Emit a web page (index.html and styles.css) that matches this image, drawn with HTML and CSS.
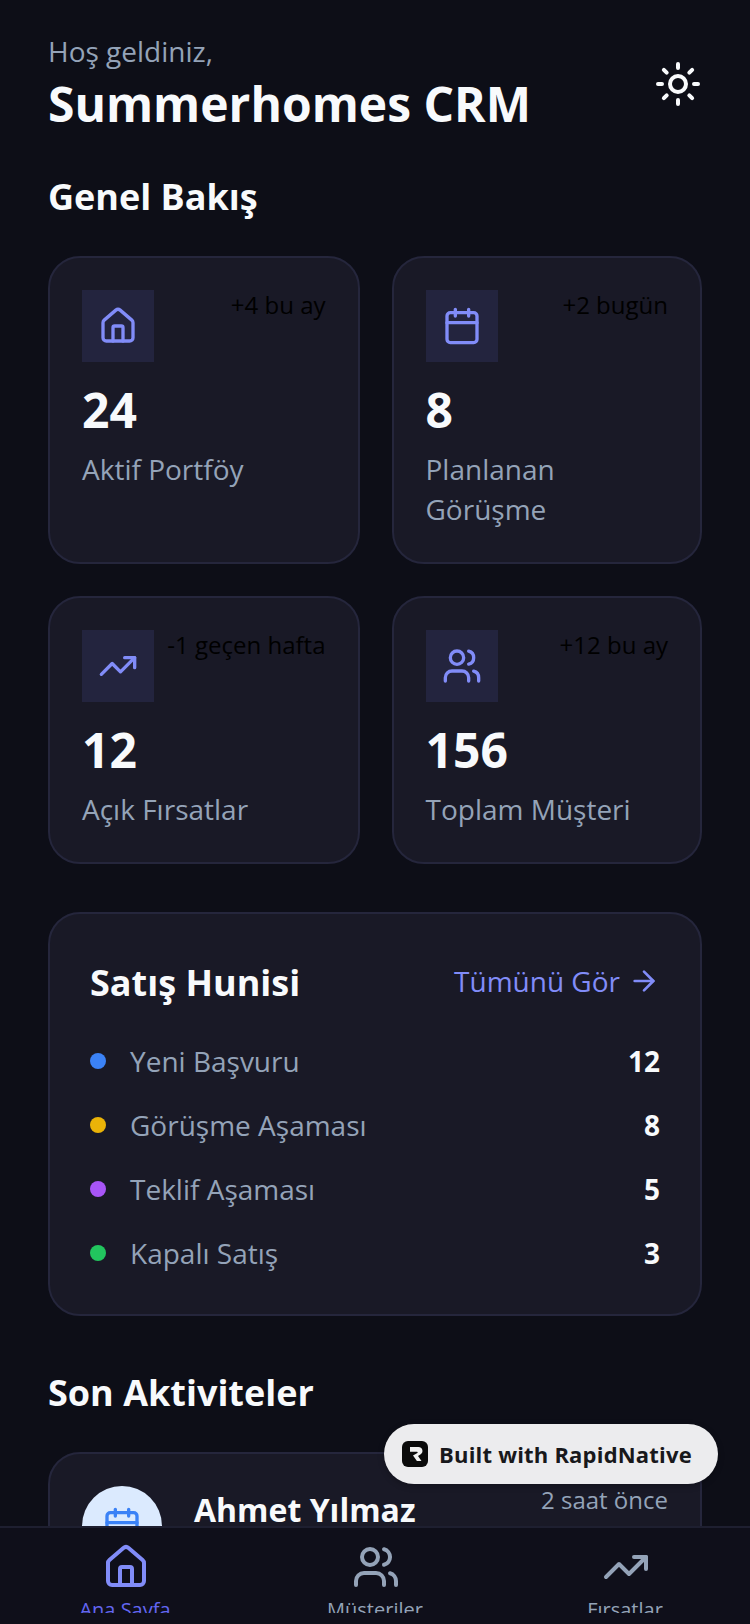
FILE: index.html
```html
<!DOCTYPE html>
<html>
<head lang="tr">
    <meta charset="UTF-8">
    <title>Summerhomes CRM</title>
    <link rel="stylesheet" href="styles.css">
</head>
<body>
<div class="app">
    <div class="content">
        <!-- header -->
        <div class="header">
            <div>
                <div class="hello">Hoş geldiniz,</div>
                <div class="brand">Summerhomes CRM</div>
            </div>
            <svg class="sun" viewBox="0 0 24 24"><circle cx="12" cy="12" r="4"/><path d="M12 2v2M12 20v2M4.93 4.93l1.41 1.41M17.66 17.66l1.41 1.41M2 12h2M20 12h2M6.34 17.66l-1.41 1.41M19.07 4.93l-1.41 1.41"/></svg>
        </div>

        <h2 class="section-title">Genel Bakış</h2>
        <div class="stats">
            <div class="stat-card">
                <div class="stat-top">
                    <div class="stat-icon"><svg class="icon" viewBox="0 0 24 24"><path d="M15 21v-8a1 1 0 0 0-1-1h-4a1 1 0 0 0-1 1v8"/><path d="M3 10a2 2 0 0 1 .709-1.528l7-5.999a2 2 0 0 1 2.582 0l7 5.999A2 2 0 0 1 21 10v9a2 2 0 0 1-2 2H5a2 2 0 0 1-2-2z"/></svg></div>
                    <span class="stat-note">+4 bu ay</span>
                </div>
                <div class="stat-value">24</div>
                <div class="stat-label">Aktif Portföy</div>
            </div>
            <div class="stat-card">
                <div class="stat-top">
                    <div class="stat-icon"><svg class="icon" viewBox="0 0 24 24"><path d="M8 2v4M16 2v4M3 10h18"/><rect x="3" y="4" width="18" height="18" rx="2"/></svg></div>
                    <span class="stat-note">+2 bugün</span>
                </div>
                <div class="stat-value">8</div>
                <div class="stat-label">Planlanan Görüşme</div>
            </div>
            <div class="stat-card">
                <div class="stat-top">
                    <div class="stat-icon"><svg class="icon" viewBox="0 0 24 24"><path d="M22 7l-8.5 8.5-5-5L2 17"/><path d="M16 7h6v6"/></svg></div>
                    <span class="stat-note">-1 geçen hafta</span>
                </div>
                <div class="stat-value">12</div>
                <div class="stat-label">Açık Fırsatlar</div>
            </div>
            <div class="stat-card">
                <div class="stat-top">
                    <div class="stat-icon"><svg class="icon" viewBox="0 0 24 24"><path d="M16 21v-2a4 4 0 0 0-4-4H6a4 4 0 0 0-4 4v2"/><circle cx="9" cy="7" r="4"/><path d="M22 21v-2a4 4 0 0 0-3-3.87"/><path d="M16 3.13a4 4 0 0 1 0 7.75"/></svg></div>
                    <span class="stat-note">+12 bu ay</span>
                </div>
                <div class="stat-value">156</div>
                <div class="stat-label">Toplam Müşteri</div>
            </div>
        </div>

        <!-- funnel -->
        <div class="funnel">
            <div class="funnel-head">
                <h3 class="funnel-title">Satış Hunisi</h3>
                <div class="see-all">Tümünü Gör <svg class="arrow" viewBox="0 0 24 24"><path d="M5 12h14"/><path d="M12 5l7 7-7 7"/></svg></div>
            </div>
            <div class="funnel-row">
                <span class="dot dot-blue"></span><span class="funnel-name">Yeni Başvuru</span><span class="funnel-num">12</span>
            </div>
            <div class="funnel-row">
                <span class="dot dot-yellow"></span><span class="funnel-name">Görüşme Aşaması</span><span class="funnel-num">8</span>
            </div>
            <div class="funnel-row">
                <span class="dot dot-purple"></span><span class="funnel-name">Teklif Aşaması</span><span class="funnel-num">5</span>
            </div>
            <div class="funnel-row">
                <span class="dot dot-green"></span><span class="funnel-name">Kapalı Satış</span><span class="funnel-num">3</span>
            </div>
        </div>

        <h2 class="section-title section-title-low">Son Aktiviteler</h2>
        <div class="activity">
            <div class="avatar"><svg class="avatar-icon" viewBox="0 0 24 24"><path d="M8 2v4M16 2v4M3 10h18"/><rect x="3" y="4" width="18" height="18" rx="2"/></svg></div>
            <div class="activity-name">Ahmet Yılmaz</div>
            <div class="activity-time">2 saat önce</div>
        </div>
    </div>

    <!-- bottom tabs -->
    <div class="tabbar">
        <div class="tab tab-active">
            <svg class="tab-icon" viewBox="0 0 24 24"><path d="M15 21v-8a1 1 0 0 0-1-1h-4a1 1 0 0 0-1 1v8"/><path d="M3 10a2 2 0 0 1 .709-1.528l7-5.999a2 2 0 0 1 2.582 0l7 5.999A2 2 0 0 1 21 10v9a2 2 0 0 1-2 2H5a2 2 0 0 1-2-2z"/></svg>
            <div class="tab-label"><span>Ana Sayfa</span></div>
        </div>
        <div class="tab">
            <svg class="tab-icon" viewBox="0 0 24 24"><path d="M16 21v-2a4 4 0 0 0-4-4H6a4 4 0 0 0-4 4v2"/><circle cx="9" cy="7" r="4"/><path d="M22 21v-2a4 4 0 0 0-3-3.87"/><path d="M16 3.13a4 4 0 0 1 0 7.75"/></svg>
            <div class="tab-label"><span>Müşteriler</span></div>
        </div>
        <div class="tab">
            <svg class="tab-icon" viewBox="0 0 24 24"><path d="M22 7l-8.5 8.5-5-5L2 17"/><path d="M16 7h6v6"/></svg>
            <div class="tab-label"><span>Fırsatlar</span></div>
        </div>
    </div>

    <div class="badge">
        <span class="badge-logo"><svg viewBox="0 0 26 26"><path d="M8 6h8.5a4 4 0 0 1 2.2 7.3L16 15l3.5 5h-4.6L11 14.5l4.4-2.6a.6.6 0 0 0-.3-1.1H8z"/></svg></span>
        <span class="badge-text">Built with RapidNative</span>
    </div>
</div>
</body>
</html>
```

FILE: styles.css
```css
*{
    box-sizing: border-box;
}
html, body{
    margin: 0;
    padding: 0;
}
body{
    font-family: "Open Sans", "Noto Sans", sans-serif;
    background: #0d0e17;
}
.app{
    width: 750px;
    height: 1624px;
    position: relative;
    overflow: hidden;
    display: flex;
    flex-direction: column;
}
.content{
    flex: 1;
    min-height: 0;
    overflow: hidden;
    padding: 32px 48px 0;
}
.header{
    display: flex;
    justify-content: space-between;
    align-items: center;
}
.hello{
    font-size: 28px;
    line-height: 38px;
    margin-bottom: 2px;
    color: #94a3b8;
}
.brand{
    font-size: 48px;
    line-height: 64px;
    font-weight: 700;
    color: #f8fafc;
}
.sun{
    width: 48px;
    height: 48px;
    fill: none;
    stroke: #f8fafc;
    stroke-width: 2;
    stroke-linecap: round;
    stroke-linejoin: round;
}
.section-title{
    margin: 37px 0 35px;
    font-size: 36px;
    line-height: 48px;
    font-weight: 700;
    color: #f8fafc;
}
.section-title-low{
    margin-top: 53px;
}
.stats{
    display: grid;
    grid-template-columns: 311.5px 310.5px;
    gap: 32px;
}
.stat-card{
    background: #191926;
    border: 2px solid #25263c;
    border-radius: 32px;
    padding: 32px 32px 33px;
}
.stat-top{
    display: flex;
    justify-content: space-between;
    align-items: flex-start;
}
.stat-icon{
    width: 72px;
    height: 72px;
    background: #23243e;
    display: flex;
    align-items: center;
    justify-content: center;
}
.icon{
    width: 40px;
    height: 40px;
    fill: none;
    stroke: #818cf8;
    stroke-width: 2;
    stroke-linecap: round;
    stroke-linejoin: round;
}
.stat-note{
    font-size: 24px;
    line-height: 30px;
    color: #000;
}
.stat-value{
    margin-top: 16px;
    font-size: 48px;
    line-height: 64px;
    font-weight: 700;
    color: #f8fafc;
}
.stat-label{
    margin-top: 7px;
    font-size: 28px;
    line-height: 40px;
    color: #94a3b8;
}
.funnel{
    margin-top: 48px;
    background: #191926;
    border: 2px solid #25263c;
    border-radius: 32px;
    padding: 40px 40px 41px;
    display: flex;
    flex-direction: column;
    gap: 24px;
}
.funnel-head{
    display: flex;
    justify-content: space-between;
    align-items: flex-start;
    height: 56px;
    margin-bottom: 7px;
}
.funnel-title{
    margin: 0;
    font-size: 36px;
    line-height: 58px;
    font-weight: 700;
    color: #f8fafc;
}
.see-all{
    display: flex;
    align-items: center;
    gap: 8px;
    height: 54px;
    font-size: 28px;
    color: #818cf8;
}
.arrow{
    width: 32px;
    height: 32px;
    fill: none;
    stroke: #818cf8;
    stroke-width: 2;
    stroke-linecap: round;
    stroke-linejoin: round;
}
.funnel-row{
    display: flex;
    align-items: center;
    height: 40px;
}
.dot{
    width: 16px;
    height: 16px;
    border-radius: 50%;
    margin-right: 24px;
}
.dot-blue{ background: #3b82f6; }
.dot-yellow{ background: #eab308; }
.dot-purple{ background: #a855f7; }
.dot-green{ background: #22c55e; }
.funnel-name{
    flex: 1;
    font-size: 28px;
    line-height: 40px;
    color: #94a3b8;
}
.funnel-num{
    font-size: 28px;
    line-height: 40px;
    font-weight: 700;
    color: #f8fafc;
}
.activity{
    background: #191926;
    border: 2px solid #25263c;
    border-radius: 32px;
    padding: 32px;
    display: flex;
    align-items: flex-start;
    height: 200px;
}
.avatar{
    width: 80px;
    height: 80px;
    border-radius: 50%;
    background: #dbeafe;
    display: flex;
    align-items: center;
    justify-content: center;
    flex-shrink: 0;
}
.avatar-icon{
    width: 40px;
    height: 40px;
    fill: none;
    stroke: #3b82f6;
    stroke-width: 2;
    stroke-linecap: round;
    stroke-linejoin: round;
}
.activity-name{
    flex: 1;
    margin-left: 32px;
    font-size: 32px;
    line-height: 48px;
    font-weight: 700;
    color: #f8fafc;
}
.activity-time{
    font-size: 24px;
    line-height: 28px;
    color: #94a3b8;
}
.tabbar{
    height: 98px;
    flex-shrink: 0;
    display: flex;
    background: #0f0f1a;
    border-top: 2px solid #1e1f30;
    padding-top: 15px;
}
.tab{
    width: 250px;
    display: flex;
    flex-direction: column;
    align-items: center;
}
.tab-icon{
    width: 48px;
    height: 48px;
    margin-left: 2px;
    fill: none;
    stroke: #94a3b8;
    stroke-width: 2;
    stroke-linecap: round;
    stroke-linejoin: round;
}
.tab-active .tab-icon{
    stroke: #818cf8;
}
.tab-label{
    height: 16px;
    margin-top: 6px;
    overflow: hidden;
    font-size: 20px;
    line-height: 25px;
    color: #94a3b8;
}
.tab-active .tab-label{
    color: #6366f1;
}
.badge{
    position: absolute;
    left: 384px;
    top: 1424px;
    width: 334px;
    height: 60px;
    border-radius: 30px;
    background: #ececee;
    box-shadow: 0 2px 6px rgba(0, 0, 0, 0.25);
    display: flex;
    align-items: center;
    padding-left: 18px;
}
.badge-logo{
    width: 26px;
    height: 26px;
    border-radius: 6px;
    background: #0b0b0b;
    display: flex;
}
.badge-logo svg{
    width: 26px;
    height: 26px;
    fill: #f2f2f2;
}
.badge-text{
    margin-left: 11px;
    font-family: "Open Sans", sans-serif;
    font-size: 22px;
    font-weight: 700;
    letter-spacing: 0.2px;
    color: #18181b;
}
```
